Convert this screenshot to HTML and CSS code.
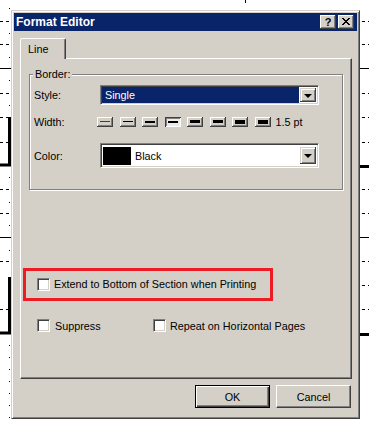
FILE: index.html
```html
<!DOCTYPE html>
<html lang="en">
<head>
  <meta charset="UTF-8" />
  <title>Format Editor</title>
  <link rel="stylesheet" href="styles.css">
</head>
<body>
  <!-- report canvas behind the dialog -->
  <svg class="canvas" width="369" height="425" viewBox="0 0 369 425">
    <g stroke="#000" stroke-width="1" stroke-dasharray="3 3" fill="none">
      <path d="M0 21.5H11M0 44.5H11M0 93.5H11M0 117.5H8M0 142.5H8M0 189.5H11M0 213.5H11M0 261.5H11M0 309.5H8"/>
      <path d="M362 21.5H369M362 44.5H369M362 93.5H369M362 117.5H369M362 142.5H369M362 189.5H369M362 213.5H369M362 261.5H369M362 285.5H369M362 309.5H369"/>
    </g>
    <g stroke="#000" fill="none">
      <path d="M0 68.5H11M0 237.5H11M360 68.5H369M360 237.5H369M245.5 0V3"/>
      <path d="M9.5 117V166M0 165H11M9.5 277V334M0 333H11" stroke-width="3"/>
      <path d="M360 166.5H369M360 334.5H369" stroke-width="3"/>
    </g>
    <g fill="#000">
      <rect x="9" y="8" width="1" height="1"/><rect x="9" y="33" width="1" height="1"/>
      <rect x="9" y="57" width="1" height="1"/><rect x="9" y="80" width="1" height="1"/>
      <rect x="9" y="105" width="1" height="1"/><rect x="9" y="177" width="1" height="1"/>
      <rect x="9" y="202" width="1" height="1"/><rect x="9" y="225" width="1" height="1"/>
      <rect x="9" y="250" width="1" height="1"/><rect x="9" y="345" width="1" height="1"/>
      <rect x="9" y="357" width="1" height="1"/><rect x="9" y="369" width="1" height="1"/>
      <rect x="9" y="381" width="1" height="1"/><rect x="9" y="393" width="1" height="1"/>
      <rect x="9" y="405" width="1" height="1"/><rect x="9" y="417" width="1" height="1"/>
    </g>
  </svg>

  <div class="dialog">
    <div class="titlebar">
      <span class="title">Format Editor</span>
      <span class="tbtn help">?</span>
      <span class="tbtn close">
        <svg width="8" height="7" viewBox="0 0 8 7"><path d="M0 0L7 7M1 0L8 7M7 0L0 7M8 0L1 7" stroke="#000" stroke-width="1"/></svg>
      </span>
    </div>

    <div class="tabs">
      <div class="tab">Line</div>
    </div>

    <div class="panel">
      <div class="group">
        <span class="group-label">Border:</span>

        <div class="field-row style-row">
          <span class="field-label">Style:</span>
          <div class="combo">
            <div class="combo-value selected">Single</div>
            <span class="drop"><i class="arrow"></i></span>
          </div>
        </div>

        <div class="field-row width-row">
          <span class="field-label">Width:</span>
          <div class="widths">
            <span class="wbtn"><i class="bar b1"></i></span>
            <span class="wbtn"><i class="bar b1 dark"></i></span>
            <span class="wbtn"><i class="bar b2"></i></span>
            <span class="wbtn pressed"><i class="bar b2"></i></span>
            <span class="wbtn"><i class="bar b3"></i></span>
            <span class="wbtn"><i class="bar b3"></i></span>
            <span class="wbtn"><i class="bar b4"></i></span>
            <span class="wbtn"><i class="bar b4"></i></span>
            <span class="width-value">1.5 pt</span>
          </div>
        </div>

        <div class="field-row color-row">
          <span class="field-label">Color:</span>
          <div class="combo tall">
            <div class="combo-value"><span class="swatch"></span>Black</div>
            <span class="drop"><i class="arrow"></i></span>
          </div>
        </div>
      </div>

      <div class="highlight">
        <label class="check"><span class="box"></span>Extend to Bottom of Section when Printing</label>
      </div>

      <div class="check-row">
        <label class="check suppress"><span class="box"></span>Suppress</label>
        <label class="check"><span class="box"></span>Repeat on Horizontal Pages</label>
      </div>
    </div>

    <div class="actions">
      <button class="btn default">OK</button>
      <button class="btn">Cancel</button>
    </div>
  </div>
</body>
</html>
```

FILE: styles.css
```css
body {
  margin: 0;
  width: 369px;
  height: 425px;
  position: relative;
  overflow: hidden;
  background: #fff;
  font-family: "Liberation Sans", Arial, sans-serif;
  font-size: 10.8px;
  color: #000;
}

.canvas {
  position: absolute;
  left: 0;
  top: 0;
}

/* dialog window sits over the report canvas */
.dialog {
  position: absolute;
  left: 11px;
  top: 10px;
  width: 349px;
  height: 409px;
  box-sizing: border-box;
  padding: 2px;
  background: #d4d0c8;
  border: 1px solid;
  border-color: #d4d0c8 #404040 #404040 #d4d0c8;
  box-shadow: inset 1px 1px #fff, inset -1px -1px #808080;
}

.titlebar {
  height: 18px;
  display: flex;
  align-items: center;
  padding: 0 3px 0 2px;
  background: #0a246a;
  color: #fff;
  font-weight: bold;
  font-size: 12px;
}

.title {
  flex: 1;
}

.tbtn {
  width: 16px;
  height: 14px;
  box-sizing: border-box;
  display: flex;
  align-items: center;
  justify-content: center;
  background: #d4d0c8;
  color: #000;
  font-size: 11px;
  font-weight: bold;
  box-shadow: inset -1px -1px #404040, inset 1px 1px #fff, inset -2px -2px #808080;
}

.tbtn.help {
  margin-right: 2px;
  padding-bottom: 1px;
}

.tbtn svg {
  display: block;
  margin-bottom: 1px;
}

.tabs {
  display: flex;
  margin: 7px 0 0 6px;
  position: relative;
  z-index: 1;
}

.tab {
  width: 46px;
  height: 21px;
  box-sizing: border-box;
  margin-bottom: -1px;
  padding: 4px 0 0 7px;
  background: #d4d0c8;
  border-left: 1px solid #fff;
  border-top: 1px solid #fff;
  border-right: 1px solid #404040;
  border-radius: 2px 2px 0 0;
  box-shadow: inset -1px 0 #808080;
}

.panel {
  width: 332px;
  height: 321px;
  box-sizing: border-box;
  margin-left: 6px;
  border: 1px solid;
  border-color: #fff #404040 #404040 #fff;
  box-shadow: inset -1px -1px #808080;
}

.group {
  position: relative;
  width: 314px;
  height: 116px;
  box-sizing: border-box;
  margin: 15px 0 0 8px;
  padding: 10px 0 0 4px;
  border: 1px solid #808080;
  box-shadow: 1px 1px #fff, inset 1px 1px #fff;
}

.group-label {
  position: absolute;
  left: 3px;
  top: -7px;
  padding: 0 2px;
  line-height: 13px;
  background: #d4d0c8;
}

.field-row {
  display: flex;
  align-items: center;
}

.field-label {
  width: 66px;
}

.style-row {
  height: 20px;
}

.width-row {
  height: 10px;
  margin-top: 12px;
}

.width-row .field-label {
  width: 63px;
}

.color-row {
  height: 25px;
  margin-top: 16px;
}

.combo {
  width: 219px;
  height: 20px;
  box-sizing: border-box;
  display: flex;
  padding: 2px;
  background: #fff;
  border: 1px solid;
  border-color: #808080 #fff #fff #808080;
  box-shadow: inset 1px 1px #404040, inset -1px -1px #d4d0c8;
}

.combo.tall {
  height: 25px;
}

.combo-value {
  flex: 1;
  display: flex;
  align-items: center;
  padding-left: 2px;
}

.combo-value.selected {
  background: #0a246a;
  color: #fff;
  margin: -1px 1px -1px -1px;
  padding-left: 3px;
}

.swatch {
  width: 28px;
  height: 18px;
  margin: 0 4px 0 -2px;
  background: #000;
}

.drop {
  width: 16px;
  box-sizing: border-box;
  display: flex;
  align-items: center;
  justify-content: center;
  background: #d4d0c8;
  box-shadow: inset -1px -1px #404040, inset 1px 1px #d4d0c8, inset 2px 2px #fff, inset -2px -2px #808080;
}

.tall .drop {
  height: 17px;
  align-self: center;
}

.arrow {
  width: 0;
  height: 0;
  border-left: 4px solid transparent;
  border-right: 4px solid transparent;
  border-top: 4px solid #000;
  margin: 1px 0 0 0;
}

.widths {
  display: flex;
  align-items: center;
  gap: 6.57px;
}

.wbtn {
  width: 16px;
  height: 10px;
  box-sizing: border-box;
  display: flex;
  align-items: center;
  justify-content: center;
  background: #d4d0c8;
  box-shadow: inset -1px -1px #404040, inset 1px 1px #fff, inset -2px -2px #808080;
}

.wbtn.pressed {
  background: #ecebe8;
  box-shadow: inset 1px 1px #404040, inset -1px -1px #fff, inset 2px 2px #808080;
}

.bar {
  width: 10px;
  margin-bottom: 1px;
  background: #000;
}

.bar.b1 {
  height: 1px;
  background: #404040;
}

.bar.b1.dark {
  background: #000;
}

.bar.b2 {
  height: 2px;
}

.bar.b3 {
  height: 3px;
}

.bar.b4 {
  height: 4px;
}

.width-value {
  margin-left: -2px;
}

.highlight {
  width: 250px;
  height: 33px;
  box-sizing: border-box;
  display: flex;
  align-items: center;
  margin: 78px 0 0 2px;
  padding: 0 0 1px 11px;
  border: 3px solid #ed1c24;
}

.check {
  display: flex;
  align-items: center;
}

.box {
  width: 13px;
  height: 13px;
  box-sizing: border-box;
  margin-right: 4px;
  background: #fff;
  border: 1px solid;
  border-color: #808080 #fff #fff #808080;
  box-shadow: inset 1px 1px #404040, inset -1px -1px #d4d0c8;
}

.check-row {
  display: flex;
  align-items: center;
  height: 13px;
  margin: 18px 0 0 16px;
}

.check.suppress {
  width: 116px;
}

.suppress .box {
  margin-right: 5px;
}

.actions {
  display: flex;
  justify-content: flex-end;
  gap: 6px;
  width: 337px;
  margin-top: 6px;
}

.btn {
  width: 75px;
  height: 23px;
  padding: 0;
  font: inherit;
  color: #000;
  background: #d4d0c8;
  border: 1px solid;
  border-color: #fff #404040 #404040 #fff;
  box-shadow: inset -1px -1px #808080;
}

.btn.default {
  border-color: #000;
  box-shadow: inset 1px 1px #fff, inset -1px -1px #404040, inset -2px -2px #808080;
}
```
